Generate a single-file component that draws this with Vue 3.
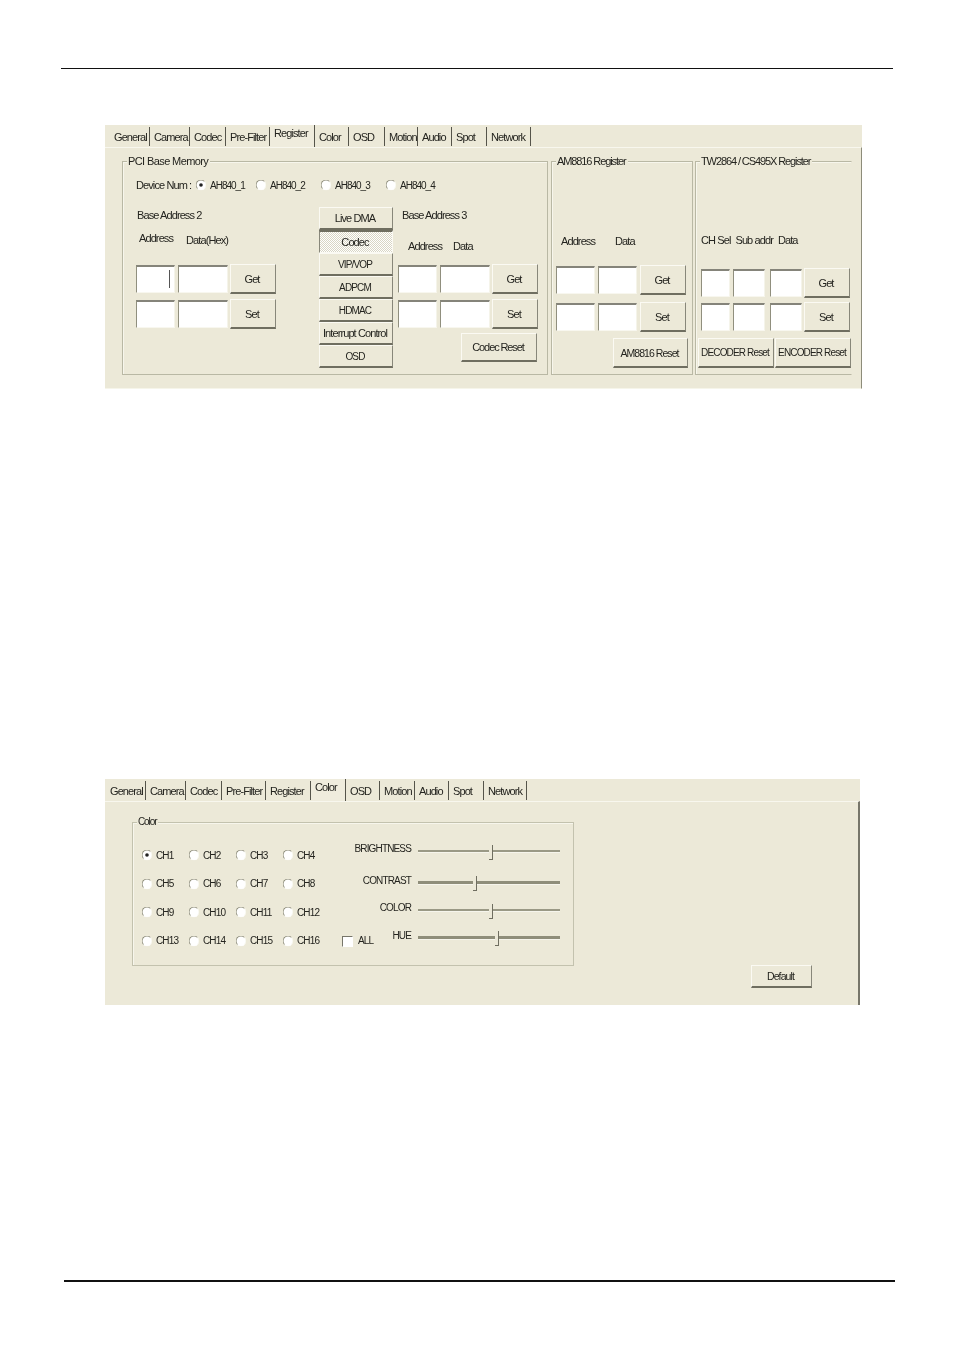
<script setup>
const registerTabs = [
  { name: 'General', w: 40 }, { name: 'Camera', w: 40 }, { name: 'Codec', w: 36 }, { name: 'Pre-Filter', w: 44 },
  { name: 'Register', w: 45, active: true }, { name: 'Color', w: 34 }, { name: 'OSD', w: 36 }, { name: 'Motion', w: 33 },
  { name: 'Audio', w: 34 }, { name: 'Spot', w: 35 }, { name: 'Network', w: 44 }
]
const colorTabs = [
  { name: 'General', w: 40 }, { name: 'Camera', w: 40 }, { name: 'Codec', w: 36 }, { name: 'Pre-Filter', w: 44 },
  { name: 'Register', w: 45 }, { name: 'Color', w: 35, active: true }, { name: 'OSD', w: 34 }, { name: 'Motion', w: 35 },
  { name: 'Audio', w: 34 }, { name: 'Spot', w: 35 }, { name: 'Network', w: 43 }
]
const devices = ['AH840_1', 'AH840_2', 'AH840_3', 'AH840_4']
const pages = [
  { name: 'Live DMA' }, { name: 'Codec', pressed: true }, { name: 'VIP/VOP', caps: true }, { name: 'ADPCM', caps: true },
  { name: 'HDMAC', caps: true }, { name: 'Interrupt Control' }, { name: 'OSD', caps: true }
]
const channels = Array.from({ length: 16 }, (_, i) => 'CH' + (i + 1))
// pos = thumb place on the track in percent
const sliders = [
  { name: 'BRIGHTNESS', pos: 50.2 },
  { name: 'CONTRAST', pos: 39 },
  { name: 'COLOR', pos: 50.2 },
  { name: 'HUE', pos: 54.4 }
]
</script>

<template>
  <div class="page">
    <div class="rule-top"></div>

    <section class="shot shot-register">
      <div class="tabs">
        <div v-for="t in registerTabs" :key="t.name" class="tab" :class="{ active: t.active }" :style="{ width: t.w + 'px' }">{{ t.name }}</div>
      </div>
      <div class="body">
        <div class="group pci">
          <span class="legend wide">PCI Base Memory</span>
          <div class="device-row">
            <span class="device-label">Device Num :</span>
            <label v-for="(d, i) in devices" :key="d" class="radio-opt device-opt caps">
              <i class="radio" :class="{ on: i === 0 }"></i>{{ d }}
            </label>
          </div>
          <div class="pci-cols">
            <div class="col-left">
              <div class="title">Base Address 2</div>
              <div class="labels">
                <span class="l-addr2">Address</span>
                <span class="l-data2">Data(Hex)</span>
              </div>
              <div class="field-row">
                <div class="input w39 caret"></div>
                <div class="input w50"></div>
                <button class="btn get">Get</button>
              </div>
              <div class="field-row second">
                <div class="input w39"></div>
                <div class="input w50"></div>
                <button class="btn get">Set</button>
              </div>
            </div>
            <div class="col-pages">
              <button v-for="p in pages" :key="p.name" class="btn page-btn" :class="{ pressed: p.pressed, caps: p.caps }">{{ p.name }}</button>
            </div>
            <div class="col-right">
              <div class="title t3">Base Address 3</div>
              <div class="labels">
                <span class="l-addr3">Address</span>
                <span class="l-data3">Data</span>
              </div>
              <div class="field-row">
                <div class="input w39"></div>
                <div class="input w50"></div>
                <button class="btn get">Get</button>
              </div>
              <div class="field-row second">
                <div class="input w39"></div>
                <div class="input w50"></div>
                <button class="btn get">Set</button>
              </div>
              <button class="btn codec-reset">Codec Reset</button>
            </div>
          </div>
        </div>

        <div class="group am">
          <span class="legend">AM8816 Register</span>
          <div class="labels am-labels">
            <span class="l-addr4">Address</span>
            <span class="l-data4">Data</span>
          </div>
          <div class="field-row">
            <div class="input w39"></div>
            <div class="input w39"></div>
            <button class="btn get">Get</button>
          </div>
          <div class="field-row am-second">
            <div class="input w39"></div>
            <div class="input w39"></div>
            <button class="btn get">Set</button>
          </div>
          <button class="btn am-reset">AM8816 Reset</button>
        </div>

        <div class="group tw">
          <span class="legend">TW2864 / CS495X Register</span>
          <div class="labels tw-labels">
            <span class="l-ch">CH Sel</span>
            <span class="l-sub">Sub addr</span>
            <span class="l-data5">Data</span>
          </div>
          <div class="field-row">
            <div class="input w29"></div>
            <div class="input w32"></div>
            <div class="input w32 mid"></div>
            <button class="btn get">Get</button>
          </div>
          <div class="field-row tw-second">
            <div class="input w29"></div>
            <div class="input w32"></div>
            <div class="input w32 mid"></div>
            <button class="btn get">Set</button>
          </div>
          <div class="tw-resets">
            <button class="btn tw-reset caps">DECODER Reset</button>
            <button class="btn tw-reset caps">ENCODER Reset</button>
          </div>
        </div>
      </div>
    </section>

    <section class="shot shot-color">
      <div class="tabs">
        <div v-for="t in colorTabs" :key="t.name" class="tab" :class="{ active: t.active }" :style="{ width: t.w + 'px' }">{{ t.name }}</div>
      </div>
      <div class="body color-body">
        <div class="group color-group">
          <span class="legend">Color</span>
          <div class="channels">
            <label v-for="(c, i) in channels" :key="c" class="radio-opt">
              <i class="radio" :class="{ on: i === 0 }"></i>{{ c }}
            </label>
            <label class="all-opt"><i class="check"></i>ALL</label>
          </div>
          <div class="sliders">
            <div v-for="s in sliders" :key="s.name" class="slider">
              <span class="slider-name">{{ s.name }}</span>
              <div class="track">
                <i class="thumb" :style="{ left: s.pos + '%' }"></i>
              </div>
            </div>
          </div>
        </div>
        <button class="btn default-btn">Default</button>
      </div>
    </section>

    <div class="rule-bottom"></div>
  </div>
</template>

<style>
body {
  background: #fff;
}
</style>

<style scoped>
.page {
  width: 954px;
  height: 1352px;
  display: flex;
  flex-direction: column;
  align-items: flex-start;
  overflow: hidden;
  font-family: "Liberation Sans", Arial, sans-serif;
  font-size: 11px;
  letter-spacing: -0.9px;
  color: #24241f;
}
.caps {
  font-size: 10px;
  letter-spacing: -1px;
}
.rule-top {
  margin: 68px 0 0 61px;
  width: 832px;
  height: 1px;
  background: #111;
}
.rule-bottom {
  margin: 275px 0 0 64px;
  width: 831px;
  height: 2px;
  background: #111;
}

.shot {
  margin-left: 105px;
  background: #ece9d8;
  display: flex;
  flex-direction: column;
  filter: blur(0.3px);
}
.shot-register {
  margin-top: 56px;
  width: 757px;
  height: 264px;
}
.shot-color {
  margin-top: 390px;
  width: 755px;
  height: 226px;
  filter: blur(0.55px);
}

.tabs {
  display: flex;
  height: 22px;
  flex: none;
  padding-left: 5px;
  align-items: flex-end;
}
.shot-color .tabs {
  padding-left: 1px;
}
.tab {
  height: 19px;
  margin-bottom: 1px;
  padding: 3px 0 0 4px;
  line-height: 15px;
  box-sizing: border-box;
  border-right: 1px solid #55544a;
  white-space: nowrap;
}
.tab.active {
  height: 22px;
  margin-bottom: 0;
  padding-top: 1px;
  background: #efecdd;
}
.body {
  flex: 1;
  display: flex;
  padding: 13px 0 0 17px;
  border-top: 1px solid #f8f7ee;
  border-right: 1px solid #8d8c7a;
  border-bottom: 1px solid #f6f5ea;
  box-sizing: border-box;
}
.shot-color .body {
  padding: 20px 0 0 27px;
  border-bottom: 0;
  border-right: 2px solid #77766a;
}

.group {
  position: relative;
  height: 214px;
  box-sizing: border-box;
  border: 1px solid #b9b8a4;
  box-shadow: inset 1px 1px 0 #f7f6ec;
  flex: none;
}
.legend {
  position: absolute;
  top: -8px;
  left: 4px;
  padding: 0 2px 0 1px;
  line-height: 14px;
  letter-spacing: -1.1px;
  background: #ece9d8;
  white-space: nowrap;
}
.legend.wide {
  letter-spacing: -0.6px;
}

.pci {
  width: 426px;
  padding: 16px 0 0 13px;
}
.am {
  width: 142px;
  margin-left: 3px;
  padding: 72px 0 0 4px;
}
.tw {
  width: 157px;
  margin-left: 2px;
  padding: 71px 0 0 5px;
  border-right-color: transparent;
}

.device-row {
  display: flex;
  height: 14px;
  align-items: center;
}
.device-label {
  width: 59px;
  white-space: nowrap;
}
.device-opt {
  width: 65px;
}
.device-opt:nth-child(2) {
  width: 60px;
}
.radio-opt {
  display: flex;
  align-items: center;
  gap: 3px;
}
.radio {
  width: 10px;
  height: 10px;
  flex: none;
  position: relative;
  border-radius: 50%;
  border: 1px solid;
  border-color: #8f8e7c #f7f6ec #fff #8f8e7c;
  background: #fff;
  box-sizing: content-box;
  transform: scale(0.9);
}
.radio.on::after {
  content: "";
  position: absolute;
  left: 3px;
  top: 3px;
  width: 4px;
  height: 4px;
  border-radius: 50%;
  background: #222;
}

.pci-cols {
  display: flex;
  margin-top: 15px;
}
.col-left {
  width: 183px;
}
.col-pages {
  width: 74px;
  display: flex;
  flex-direction: column;
}
.col-right {
  width: 139px;
  margin-left: 5px;
  display: flex;
  flex-direction: column;
}
.title {
  height: 16px;
  line-height: 16px;
  padding-left: 1px;
}
.title.t3 {
  padding-left: 4px;
}
.labels {
  display: flex;
  align-items: flex-start;
  height: 41px;
  line-height: 14px;
}
.l-addr2 { margin: 8px 0 0 3px; }
.l-data2 { margin: 10px 0 0 13px; }
.l-addr3 { margin: 16px 0 0 10px; }
.l-data3 { margin: 16px 0 0 11px; }
.am-labels { height: 31px; }
.l-addr4 { margin-left: 5px; }
.l-data4 { margin-left: 20px; }
.tw-labels { height: 35px; }
.l-sub { margin-left: 5px; }
.l-data5 { margin-left: 5px; }

.field-row {
  display: flex;
  align-items: center;
  height: 30px;
}
.field-row.second {
  margin-top: 5px;
}
.am-second {
  margin-top: 7px;
}
.tw-second {
  margin-top: 4px;
}
.input {
  height: 28px;
  box-sizing: border-box;
  flex: none;
  margin-right: 3px;
  position: relative;
  background: #fff;
  border: 1px solid;
  border-top: 2px solid #85847a;
  border-left-color: #908f7e;
  border-right-color: #f5f4ea;
  border-bottom-color: #f8f7ef;
}
.w29 { width: 29px; }
.w32 { width: 32px; }
.w39 { width: 39px; }
.w50 { width: 50px; margin-right: 2px; }
.input.mid { margin-left: 2px; margin-right: 2px; }
.caret::after {
  content: "";
  position: absolute;
  top: 3px;
  left: 32px;
  width: 1px;
  height: 18px;
  background: #555;
}

.btn {
  box-sizing: border-box;
  padding: 0 2px 0 0;
  font-family: inherit;
  font-size: 11px;
  letter-spacing: -0.9px;
  color: inherit;
  background: #ece9d8;
  white-space: nowrap;
  border-style: solid;
  border-width: 1px 1px 2px 1px;
  border-color: #fbfaf3 #88877a #6f6e60 #fbfaf3;
}
.btn.caps {
  font-size: 10px;
  letter-spacing: -0.85px;
}
.get {
  width: 46px;
  height: 30px;
  flex: none;
}
.page-btn {
  height: 23px;
  width: 74px;
}
.page-btn.pressed {
  border-width: 2px 1px 1px 1px;
  border-color: #6f6e60 #fbfaf3 #fbfaf3 #88877a;
  background-color: #ece9d8;
  background-image: repeating-conic-gradient(#ffffff 0 25%, #d9d6c4 0 50%);
  background-size: 2px 2px;
}
.codec-reset {
  width: 76px;
  height: 29px;
  margin: 4px 0 0 63px;
  letter-spacing: -1.1px;
}
.am-reset {
  display: block;
  width: 75px;
  height: 30px;
  margin: 6px 0 0 57px;
  font-size: 10.5px;
  letter-spacing: -0.95px;
}
.tw-resets {
  display: flex;
  gap: 1px;
  margin: 6px 0 0 -3px;
}
.tw-reset {
  width: 76px;
  height: 30px;
}

.color-body {
  display: flex;
  align-items: flex-start;
}
.color-group {
  width: 442px;
  height: 144px;
  display: flex;
  padding: 25px 0 0 8px;
  font-size: 10px;
  letter-spacing: -0.85px;
  border-color: #c3c2ae;
}
.channels {
  width: 207px;
  flex: none;
  display: grid;
  grid-template-columns: 47px 47px 47px 47px 19px;
  grid-template-rows: repeat(4, 28.67px);
  align-content: start;
}
.channels .radio-opt:nth-child(4n+1) {
  grid-column: 1;
}
.all-opt {
  grid-column: 5;
  grid-row: 4;
  margin-left: 13px;
  display: flex;
  align-items: flex-start;
  gap: 5px;
  line-height: 14px;
  white-space: nowrap;
}
.channels .radio-opt {
  height: 14px;
}
.check {
  width: 9px;
  height: 9px;
  flex: none;
  margin-top: 2px;
  background: #fff;
  border: 1px solid;
  border-color: #77766a #fff #fff #77766a;
}
.sliders {
  width: 212px;
  margin-top: -4px;
  margin-left: 2px;
}
.slider {
  display: flex;
  height: 14px;
  align-items: center;
  margin-bottom: 14px;
}
.slider:first-child {
  margin-bottom: 18px;
}
.slider:nth-child(2) {
  margin-bottom: 13px;
}
.slider-name {
  width: 61px;
  text-align: right;
  flex: none;
  margin-top: -5px;
}
.track {
  position: relative;
  width: 142px;
  height: 2px;
  margin-left: 7px;
  background: #9a9985;
  border-bottom: 1px solid #f6f5ec;
}
.slider:nth-child(even) .track {
  height: 3px;
  background: #8f8e7a;
}
.thumb {
  position: absolute;
  top: -5px;
  width: 3px;
  height: 14px;
  background: #ece9d8;
  border-right: 1px solid #6f6e60;
  border-bottom: 1px solid #6f6e60;
}
.default-btn {
  width: 61px;
  height: 23px;
  margin: 143px 0 0 177px;
  font-size: 10.5px;
}
</style>
